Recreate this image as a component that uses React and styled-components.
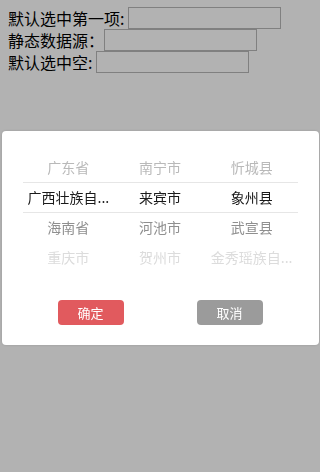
import React from 'react';
import styled, { createGlobalStyle } from 'styled-components';

const GlobalStyle = createGlobalStyle`
  html, body {
    margin: 0;
    padding: 0;
    background: #fff;
  }
  body {
    font-family: "Noto Sans CJK SC", "Noto Sans", sans-serif;
  }
`;

const Page = styled.div`
  padding: 7px 8px;
  height: 458px;
`;

const Field = styled.div`
  display: flex;
  align-items: center;
  height: 22px;
  font-size: 16px;
  line-height: 22px;
  color: #000;
  white-space: pre;
`;

const Input = styled.input`
  box-sizing: border-box;
  width: 153px;
  height: 22px;
  margin: 0;
  padding: 0 2px;
  border: 1px solid #b8b8b8;
  background: #fff;
  outline: none;
`;

const Mask = styled.div`
  position: fixed;
  inset: 0;
  background: rgba(0, 0, 0, 0.3);
  display: flex;
  align-items: center;
  justify-content: center;
`;

const Dialog = styled.div`
  box-sizing: border-box;
  width: 317px;
  height: 214px;
  margin-top: 4px;
  background: #fff;
  border-radius: 4px;
  box-shadow: 0 0 3px rgba(0, 0, 0, 0.15);
  padding: 21px 21px 0;
  display: flex;
  flex-direction: column;
`;

const Picker = styled.div`
  display: flex;
  flex-direction: column;
`;

const Row = styled.div`
  display: grid;
  grid-template-columns: repeat(3, 1fr);
  height: 30px;
  align-items: center;
  color: ${p => p.$color};
  box-shadow: ${p => (p.$selected ? 'inset 0 1px 0 #e6e6e6, 0 1px 0 #e6e6e6' : 'none')};
`;

const Cell = styled.div`
  font-size: 14px;
  text-align: center;
  padding: 0 2px;
  white-space: nowrap;
`;

const Actions = styled.div`
  display: flex;
  justify-content: space-between;
  padding: 0 35px;
  margin-top: 28px;
`;

const Button = styled.button`
  width: 66px;
  height: 25px;
  border: none;
  border-radius: 4px;
  background: ${p => (p.$primary ? '#e15a5e' : '#9b9b9b')};
  color: #fff;
  font-family: "Noto Sans CJK SC", sans-serif;
  font-size: 13px;
  padding: 0;
`;

// long names are shown shortened, as the picker draws them
const rows = [
  { color: '#b9b9b9', items: ['广东省', '南宁市', '忻城县'] },
  { color: '#1a1a1a', items: ['广西壮族自...', '来宾市', '象州县'], selected: true },
  { color: '#8f8f8f', items: ['海南省', '河池市', '武宣县'] },
  { color: '#dcdcdc', items: ['重庆市', '贺州市', '金秀瑶族自...'] },
];

export default function App() {
  return (
    <>
      <GlobalStyle />
      <Page>
        <Field>默认选中第一项: <Input readOnly /></Field>
        <Field>静态数据源：<Input readOnly /></Field>
        <Field>默认选中空: <Input readOnly /></Field>
      </Page>
      <Mask>
        <Dialog>
          <Picker>
            {rows.map((r, i) => (
              <Row key={i} $color={r.color} $selected={r.selected}>
                {r.items.map(t => <Cell key={t}>{t}</Cell>)}
              </Row>
            ))}
          </Picker>
          <Actions>
            <Button $primary>确定</Button>
            <Button>取消</Button>
          </Actions>
        </Dialog>
      </Mask>
    </>
  );
}
